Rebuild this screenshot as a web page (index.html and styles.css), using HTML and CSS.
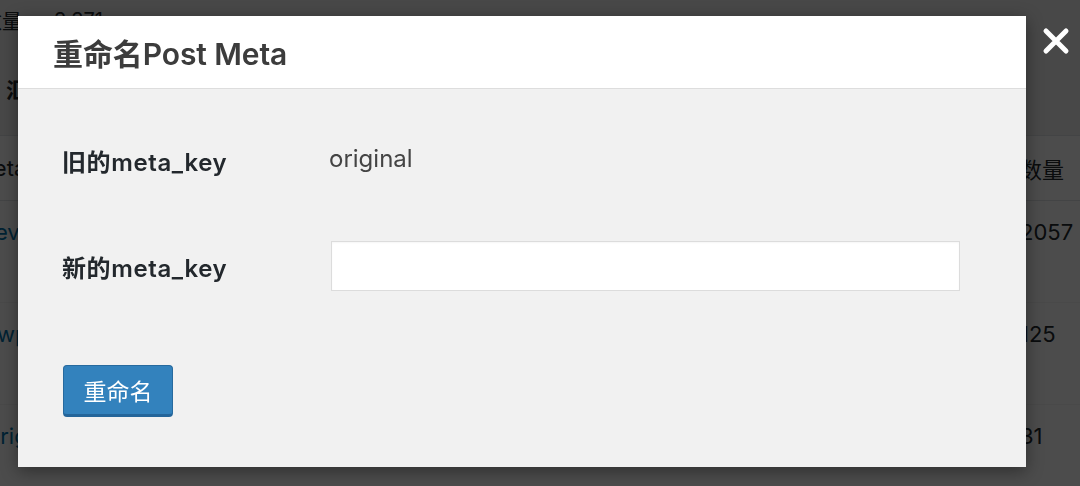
FILE: index.html
```html
<!DOCTYPE html>
<html lang="zh-CN">
<head>
<meta charset="utf-8">
<title>重命名Post Meta</title>
<link rel="stylesheet" href="styles.css">
</head>
<body>
<div class="page">
  <div class="stats"><span class="stats-label">数量：</span><span class="stats-num">3,371</span></div>
  <div class="tabs"><span class="tab">汇总</span></div>
  <div class="table">
    <div class="row head"><span class="cell-left">Meta key</span><span class="cell-right">数量</span></div>
    <div class="row"><a class="cell-left link">review</a><span class="cell-right">2057</span></div>
    <div class="row"><a class="cell-left link">_wp_page</a><span class="cell-right">125</span></div>
    <div class="row"><a class="cell-left link">original</a><span class="cell-right">31</span></div>
  </div>
</div>
<div class="overlay"></div>
<button class="close" aria-label="关闭">
  <svg width="28" height="28" viewBox="0 0 28 28"><path d="M4 4 L24 24 M24 4 L4 24" stroke="#fff" stroke-width="5" stroke-linecap="round"/></svg>
</button>
<div class="modal">
  <div class="modal-head"><h1 class="modal-title">重命名Post Meta</h1></div>
  <div class="modal-body">
    <div class="form">
      <div class="label">旧的meta_key</div>
      <div class="value">original</div>
      <div class="label">新的meta_key</div>
      <div class="value"><input class="field" type="text"></div>
    </div>
    <button class="btn">重命名</button>
  </div>
</div>
</body>
</html>
```
FILE: styles.css
```css
html, body {
  margin: 0;
  padding: 0;
  width: 1080px;
  height: 486px;
  overflow: hidden;
  background: #f1f1f1;
  font-family: "Inter", "Noto Sans CJK SC", sans-serif;
  color: #23282d;
}
.page {
  margin-left: -26px;
  width: 1120px;
}
.stats {
  height: 40px;
  display: flex;
  align-items: center;
  font-size: 20px;
  padding-left: 8px;
}
.stats-label { width: 72px; }
.tabs {
  height: 95px;
  display: flex;
  align-items: center;
  font-size: 22px;
  font-weight: 700;
  padding-left: 32px;
  border-bottom: 1px solid #e2e4e7;
}
.table {
  background: #fff;
}
.row {
  display: flex;
  justify-content: space-between;
  align-items: flex-start;
  box-sizing: border-box;
  height: 102px;
  padding-top: 18px;
  font-size: 22px;
  border-bottom: 1px solid #f3f3f3;
}
.row.head {
  height: 65px;
  padding-top: 0;
  align-items: center;
  background: #fff;
  border-bottom: 1px solid #e2e4e7;
}
.cell-left { padding-left: 13px; }
.row.head .cell-left { padding-left: 0; }
.cell-right { width: 74px; }
.link { color: #0073aa; }
.overlay {
  position: fixed;
  inset: 0;
  background: rgba(0, 0, 0, 0.7);
}
.close {
  position: absolute;
  left: 1042px;
  top: 27px;
  width: 28px;
  height: 28px;
  padding: 0;
  border: 0;
  background: none;
  display: flex;
}
.modal {
  position: absolute;
  left: 18px;
  top: 16px;
  width: 1008px;
  height: 451px;
  background: #f1f1f1;
  box-shadow: 0 4px 16px rgba(0, 0, 0, 0.4);
  display: flex;
  flex-direction: column;
}
.modal-head {
  height: 72px;
  background: #fff;
  border-bottom: 1px solid #dddddd;
  display: flex;
  align-items: center;
  padding-left: 35px;
}
.modal-title {
  margin: 0;
  font-size: 30px;
  font-weight: 600;
  color: #3c3c3c;
  letter-spacing: -0.1px;
}
.modal-body {
  padding: 56px 0 0 44px;
}
.form {
  display: grid;
  grid-template-columns: 269px 629px;
  grid-template-rows: 30px 50px;
  row-gap: 66px;
  align-items: center;
}
.label {
  font-size: 24px;
  font-weight: 600;
  color: #23282d;
  letter-spacing: 0.6px;
}
.value {
  font-size: 24px;
  color: #444;
}
.value:nth-child(2) {
  margin-left: -2px;
  margin-top: -4px;
}
.field {
  box-sizing: border-box;
  width: 629px;
  height: 50px;
  border: 1px solid #dcdcdc;
  background: #fff;
  box-shadow: inset 0 1px 2px rgba(0, 0, 0, 0.04);
  margin: 0;
  display: block;
}
.btn {
  margin-top: 74px;
  margin-left: 1px;
  width: 110px;
  height: 52px;
  box-sizing: border-box;
  background: #3382bd;
  border: 1px solid #276a9e;
  border-bottom: 3px solid #24659a;
  border-radius: 4px;
  color: #fff;
  font-family: "Noto Sans CJK SC", sans-serif;
  font-size: 23px;
  padding: 0;
  display: block;
}
```
